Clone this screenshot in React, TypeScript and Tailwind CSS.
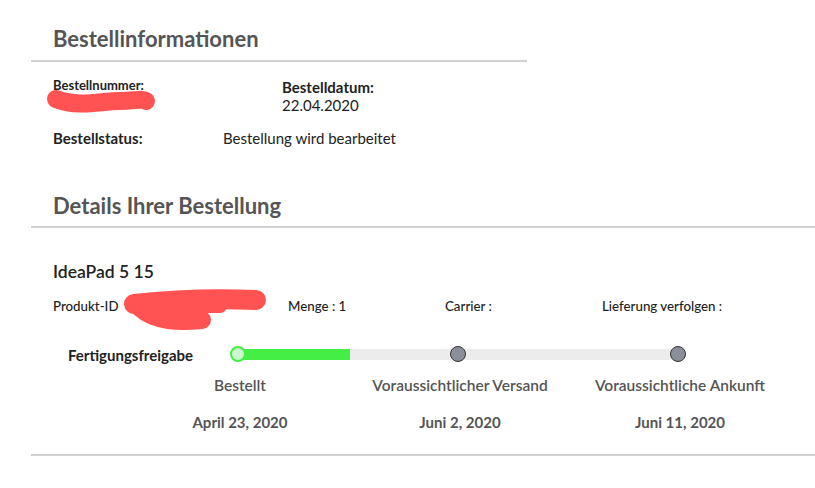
const steps = [
  { label: 'Bestellt', date: 'April 23, 2020' },
  { label: 'Voraussichtlicher Versand', date: 'Juni 2, 2020' },
  { label: 'Voraussichtliche Ankunft', date: 'Juni 11, 2020' },
];

const App = () => {
  return (
    <div className="relative w-[815px] h-[488px] bg-white pl-[31px] pt-[26px] font-['Lato','Liberation_Sans',sans-serif] text-[#222]">
      {/* Bestellinformationen */}
      <div className="w-[496px] border-b-2 border-[#d0d0d0] pb-[8px] pl-[22px]">
        <h2 className="text-[22px] leading-[26px] font-bold text-[#555]">Bestellinformationen</h2>
      </div>

      <div className="mt-[14px] pl-[22px] flex items-start">
        <div className="w-[229px] text-[13px] leading-[18px] font-bold">Bestellnummer:</div>
        <div className="pt-[2px] text-[15px] leading-[18px]">
          <div className="font-bold">Bestelldatum:</div>
          <div>22.04.2020</div>
        </div>
      </div>

      <div className="mt-[15px] pl-[22px] flex items-start text-[15px] leading-[18px]">
        <div className="w-[170px] font-bold">Bestellstatus:</div>
        <div>Bestellung wird bearbeitet</div>
      </div>

      {/* Details */}
      <div className="mt-[46px] border-b-2 border-[#d0d0d0] pb-[7px] pl-[22px]">
        <h2 className="text-[22px] leading-[26px] font-bold text-[#555]">Details Ihrer Bestellung</h2>
      </div>

      <div className="mt-[33px] pl-[22px] text-[17.5px] leading-[22px] font-semibold">IdeaPad 5 15</div>

      <div className="mt-[15px] pl-[22px] flex text-[13.3px] leading-[16px] font-medium">
        <div className="w-[235px]">Produkt-ID</div>
        <div className="w-[157px]">Menge : 1</div>
        <div className="w-[157px]">Carrier :</div>
        <div>Lieferung verfolgen :</div>
      </div>

      <div className="mt-[30px] pl-[37px] flex items-center h-[20px]">
        <div className="w-[162px] text-[15px] leading-[20px] font-bold pt-[1px]">Fertigungsfreigabe</div>
        <div className="relative w-[456px] h-[20px] flex items-center">
          <div className="mx-[8px] flex-1 h-[11px] bg-[#ececec] flex">
            <div className="w-[112px] h-full bg-[#44ee44]"></div>
          </div>
          <div className="absolute left-0 top-[2px] w-[16px] h-[16px] rounded-full bg-[#ccf7cc] border-2 border-[#44ee44]"></div>
          <div className="absolute left-[220px] top-[2px] w-[16px] h-[16px] rounded-full bg-[#8a8f99] border-[1.5px] border-[#333]"></div>
          <div className="absolute left-[440px] top-[2px] w-[16px] h-[16px] rounded-full bg-[#8a8f99] border-[1.5px] border-[#333]"></div>
        </div>
      </div>

      <div className="mt-[12px] ml-[99px] grid grid-cols-[220px_220px_220px] text-[15.5px] leading-[18px] font-semibold text-[#555]">
        {steps.map((s) => (
          <div key={s.label} className="text-center">{s.label}</div>
        ))}
      </div>
      <div className="mt-[19px] ml-[99px] grid grid-cols-[220px_220px_220px] text-[15px] leading-[18px] font-bold text-[#555]">
        {steps.map((s) => (
          <div key={s.date} className="text-center">{s.date}</div>
        ))}
      </div>

      <div className="mt-[23px] border-b-2 border-[#d0d0d0]"></div>

      {/* redaction scribbles */}
      <svg className="absolute left-0 top-0 pointer-events-none" width="815" height="488">
        <path d="M56 99 C 80 108, 100 101, 120 101 C 135 101, 142 98, 146 101" stroke="#ff5252" strokeWidth="18" strokeLinecap="round" fill="none" />
        <path d="M134 304 C 170 300, 210 298, 256 300" stroke="#ff5252" strokeWidth="20" strokeLinecap="round" fill="none" />
        <path d="M140 308 C 155 322, 180 322, 202 320" stroke="#ff5252" strokeWidth="18" strokeLinecap="round" fill="none" />
        <path d="M150 306 L 220 306" stroke="#ff5252" strokeWidth="14" strokeLinecap="round" fill="none" />
      </svg>
    </div>
  );
};

export default App;
